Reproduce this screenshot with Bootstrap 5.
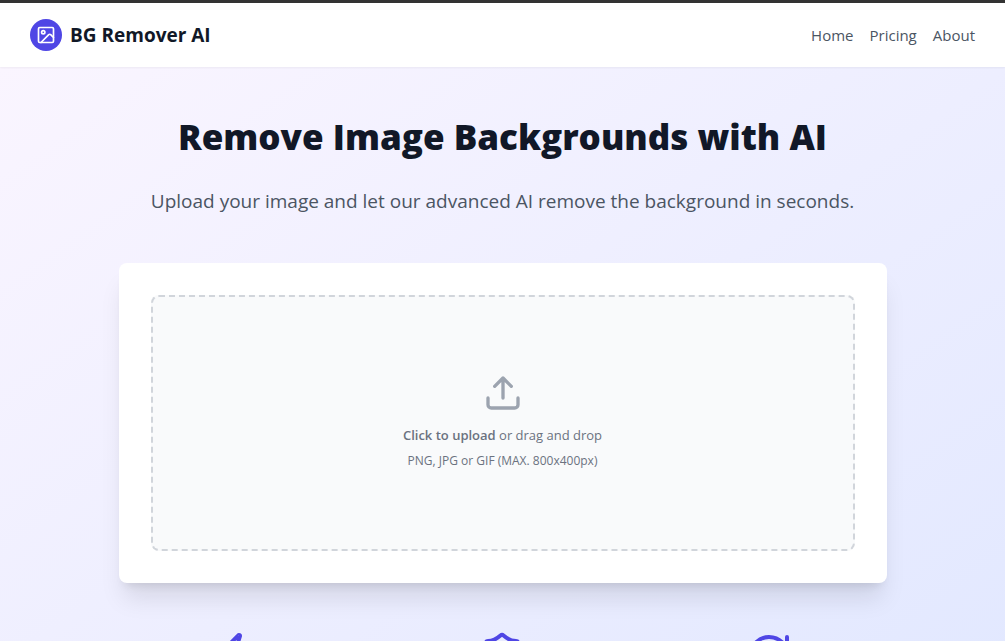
<!DOCTYPE html>
<html lang="en">
<head>
<meta charset="utf-8">
<meta name="viewport" content="width=device-width, initial-scale=1">
<title>BG Remover AI</title>
<link href="https://cdn.jsdelivr.net/npm/bootstrap@5.3.0/dist/css/bootstrap.min.css" rel="stylesheet">
<style>
  body { font-family: "Open Sans", "Noto Sans", sans-serif; color: #111827; border-top: 3px solid #333; }
  svg { fill: none; stroke: currentColor; stroke-width: 2; stroke-linecap: round; stroke-linejoin: round; }
  .site-header { height: 64px; padding: 0 30px; background: #fff; box-shadow: 0 1px 2px rgba(0, 0, 0, .05); z-index: 1; }
  .brand { gap: 8px; font-size: 19px; color: #111827; }
  .brand-mark { width: 32px; height: 32px; background: #4f46e5; color: #fff; }
  .site-nav { gap: 16px; }
  .site-nav a { font-size: 15px; color: #4b5563; }
  .hero { padding: 48px 16px 96px; background: linear-gradient(to bottom right, #faf5ff, #e0e7ff); }
  .hero-title { font-size: 35px; line-height: 44px; font-weight: 800; margin-bottom: 24px; }
  .hero-text { font-size: 19px; line-height: 36px; color: #4b5563; margin-bottom: 44px; }
  .wide { width: 100%; max-width: 768px; }
  .upload-card { padding: 32px; background: #fff; border-radius: 8px; box-shadow: 0 20px 25px -5px rgba(0, 0, 0, .1), 0 8px 10px -6px rgba(0, 0, 0, .1); }
  .drop-zone { height: 256px; padding-bottom: 4px; border: 2px dashed #d1d5db; border-radius: 8px; background: #f9fafb; color: #6b7280; cursor: pointer; }
  .drop-icon { color: #9ca3af; margin-bottom: 12px; }
  .drop-main { font-size: 13px; line-height: 20px; margin-bottom: 8px; }
  .drop-note { font-size: 12px; line-height: 16px; }
  .features { margin-top: 48px; color: #4f46e5; }
  .features .row { --bs-gutter-x: 32px; }
</style>
</head>
<body class="vh-100 overflow-hidden d-flex flex-column">
<header class="site-header position-relative d-flex align-items-center justify-content-between flex-shrink-0">
  <a href="#" class="brand d-flex align-items-center fw-bold text-decoration-none">
    <span class="brand-mark rounded-circle d-flex align-items-center justify-content-center">
      <svg width="20" height="20" viewBox="0 0 24 24" aria-hidden="true"><rect x="3" y="3" width="18" height="18" rx="1.5"/><circle cx="8.7" cy="8.7" r="2"/><path d="M21 15l-3.4-3.4a1.6 1.6 0 0 0-2.3 0L6 21"/></svg>
    </span>
    BG Remover AI
  </a>
  <nav class="site-nav d-flex">
    <a href="#" class="text-decoration-none">Home</a>
    <a href="#" class="text-decoration-none">Pricing</a>
    <a href="#" class="text-decoration-none">About</a>
  </nav>
</header>
<main class="hero d-flex flex-column align-items-center flex-shrink-0">
  <h1 class="hero-title text-center">Remove Image Backgrounds with AI</h1>
  <p class="hero-text text-center">Upload your image and let our advanced AI remove the background in seconds.</p>
  <section class="upload-card wide">
    <label for="image-file" class="drop-zone d-flex flex-column align-items-center justify-content-center text-center">
      <svg class="drop-icon" width="40" height="40" viewBox="0 0 24 24" aria-hidden="true"><path d="M21 15v4a2 2 0 0 1-2 2H5a2 2 0 0 1-2-2v-4M17 8l-5-5-5 5M12 3v12"/></svg>
      <span class="drop-main"><span class="fw-semibold">Click to upload</span> or drag and drop</span>
      <span class="drop-note">PNG, JPG or GIF (MAX. 800x400px)</span>
    </label>
    <input type="file" id="image-file" class="visually-hidden" accept="image/*">
  </section>
  <section class="features wide">
    <div class="row text-center">
      <div class="col-4"><svg width="48" height="48" viewBox="0 0 24 24" aria-hidden="true"><path d="M4 14a1 1 0 0 1-.78-1.63l9.9-10.2a.5.5 0 0 1 .86.46l-1.92 6.02A1 1 0 0 0 13 10h7a1 1 0 0 1 .78 1.63l-9.9 10.2a.5.5 0 0 1-.86-.46l1.92-6.02A1 1 0 0 0 11 14z"/></svg></div>
      <div class="col-4"><svg width="48" height="48" viewBox="0 0 24 24" aria-hidden="true"><path d="M20 13c0 5-3.5 7.5-7.66 8.95a1 1 0 0 1-.67-.01C7.5 20.5 4 18 4 13V6a1 1 0 0 1 1-1c2 0 4.5-1.2 6.24-2.72a1.17 1.17 0 0 1 1.52 0C14.51 3.81 17 5 19 5a1 1 0 0 1 1 1z"/></svg></div>
      <div class="col-4"><svg width="48" height="48" viewBox="0 0 24 24" aria-hidden="true"><path d="M3 12a9 9 0 0 1 9-9 9.75 9.75 0 0 1 6.74 2.74L21 8M21 3v5h-5M21 12a9 9 0 0 1-9 9 9.75 9.75 0 0 1-6.74-2.74L3 16M8 16H3v5"/></svg></div>
    </div>
  </section>
</main>
<script src="https://cdn.jsdelivr.net/npm/bootstrap@5.3.0/dist/js/bootstrap.bundle.min.js"></script>
</body>
</html>
